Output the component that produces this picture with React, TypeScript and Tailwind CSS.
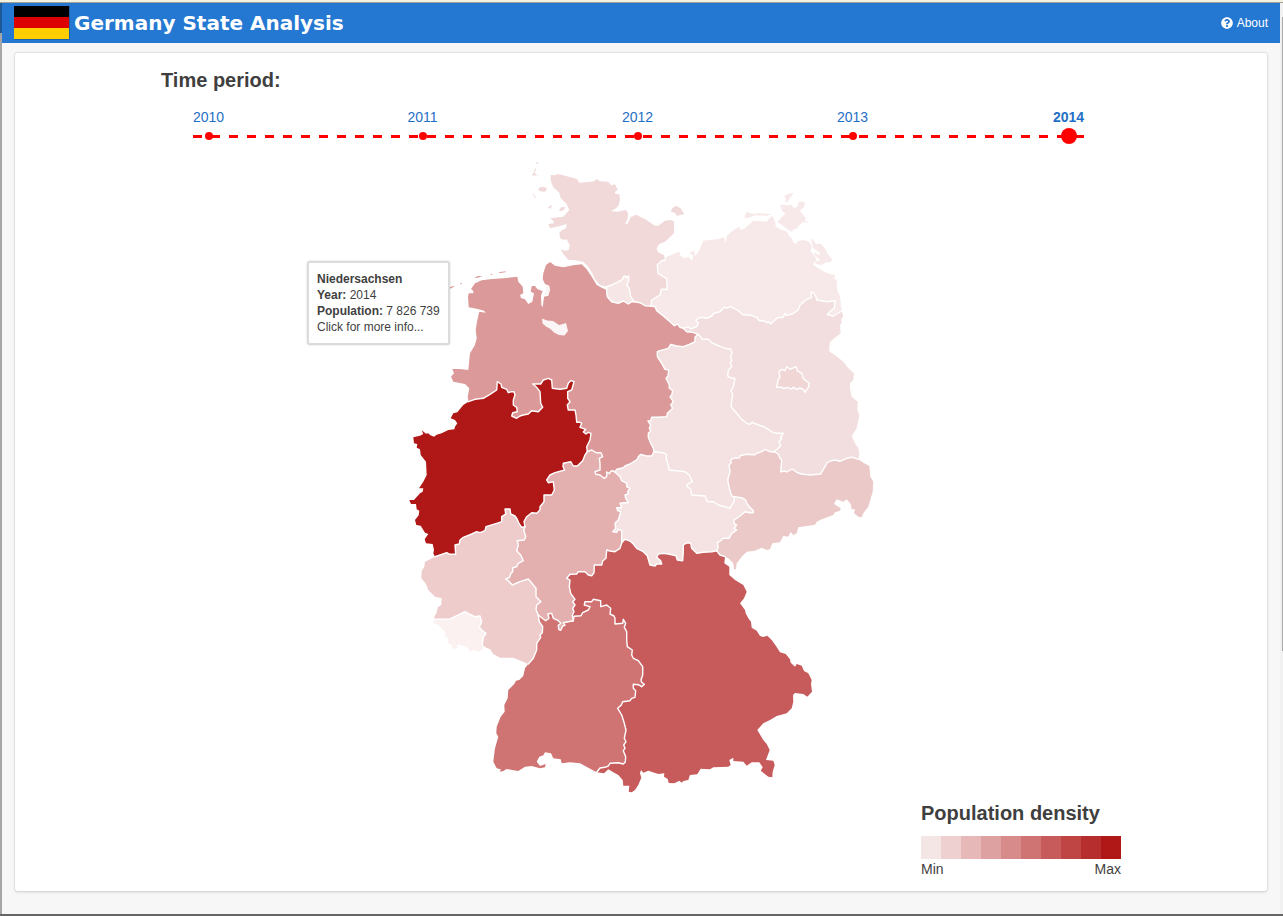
import React from "react";
import { FaQuestionCircle } from "react-icons/fa";

type Pt = [number, number];

// Outlines are recorded per survey tile: a tile origin plus offsets in thirds of a map unit.
const tile =
  (ox: number, oy: number) =>
  (s: string): Pt[] =>
    s
      .trim()
      .split(/\s+/)
      .map((p) => {
        const [x, y] = p.split(",").map(Number);
        return [ox + x / 3, oy + y / 3];
      });

const A = tile(440, 150);
const B = tile(640, 180);
const D = tile(400, 360);
const C = tile(300, 250);
const E = tile(630, 300);
const F = tile(400, 500);
const G = tile(600, 440);
const H = tile(480, 590);
const I = tile(640, 580);

const rev = (p: Pt[]) => [...p].reverse();
const line = (...parts: Pt[][]) =>
  "M" + parts.flat().map(([x, y]) => `${x.toFixed(1)} ${y.toFixed(1)}`).join("L");
const area = (...parts: Pt[][]) => line(...parts) + "Z";

// Shared borders
const shMv = B("75,240 65,242 52,255 54,280 70,290 80,296 82,328 64,328 60,345 35,360 32,378");
const shNi = A("632,468 615,467 600,458 583,455");
const hhSh = A("500,410 515,405 530,398 548,388 550,380 557,378 559,385 566,378 566,392 560,405 568,415 572,440 583,455");
const hhNi = A("583,455 575,455 565,462 550,453 535,460 515,455 502,440 500,428 500,410");
const niMv = B("32,378 45,380 50,392 70,408 90,425 103,437 113,432 120,442 130,445");
const bbMv = B("130,445 145,440 152,447 170,440 175,430 168,422 175,414 185,412 200,415 215,408 222,400 240,395 252,382 262,384 270,380 280,384 295,392 310,405 330,405 350,412 358,422 370,422 380,428 385,425 392,432 405,420 412,413 430,412 435,400 440,407 460,400 475,390 480,375 500,358 515,352 513,336 520,338 527,348 530,360 545,362 560,365 585,362 583,385 572,392 562,404 580,408 605,393");
const niBb = B("130,445 140,455 158,457 175,463");
const niSt = E("203,103 195,112 195,125 178,133 160,140 140,138 122,133 115,145 90,152 82,155 82,170 95,190 105,208 116,210 114,228 108,235 118,255 118,265 128,272 125,285 120,290 130,305 122,315 128,325 112,340 110,350 80,352 65,352 62,362 54,363 62,375 58,385 62,393 55,400 55,412 62,430 70,445 72,455");
const stBb = E("203,103 212,110 215,117 235,118 245,128 260,135 272,140 290,146 303,148 306,160 301,170 306,180 301,188 305,200 295,210 293,228 298,232 315,236 312,250 310,260 303,272 308,282 305,300 303,320 320,340 335,358 350,370 360,373 367,367 385,375 402,380 410,385 425,395 437,400 460,400 452,410 455,415 447,425 452,438 432,455");
const stSn = E("432,455 420,455 405,448 395,455 380,460 375,464 350,463 330,467 328,473 310,475 303,478 303,490 297,495 300,515 293,540 298,565 305,588 313,590");
const stTh = E("72,455 100,458 110,465 108,475 113,490 118,510 140,512 165,515 178,525 187,545 172,553 170,558 182,568 185,585 215,587 225,587 232,605 250,605 265,615 285,620 300,625 308,610 313,603 313,590");
const thSn = [...E("313,590 335,593 347,600 350,610 358,620 370,632"), ...G("460,218 450,218 435,215 420,228 402,240 402,250 410,255 402,265 410,270 395,280 387,295 370,295 360,304 352,308 355,322 350,332")];
const niTh = G("162,35 155,48 140,48 122,43 115,50 112,58 90,72 75,78 70,83 50,88 45,95");
const niHe = D("645,337 640,332 632,334 628,341 620,336 620,350 612,355 600,345 587,343 585,335 600,330 600,310 598,295 608,290 603,278 588,278 575,270 562,275");
const niNw = D("562,275 560,260 570,240 573,220 565,217 558,222 550,216 557,208 540,202 545,190 540,187 530,187 528,165 525,150 505,150 502,135 510,125 503,115 503,95 515,90 522,65 512,62 505,70 500,85 480,88 457,85 455,60 445,55 430,60 422,72 398,72 410,82 420,95 422,130 428,142 415,155 395,152 385,162 370,165 360,168 350,175 335,168 338,158 352,155 350,142 340,135 340,120 345,105 342,95 335,95 325,98 320,88 305,82 303,72 292,65 290,90 270,103 250,115 225,118 205,125");
const nwHe = D("562,275 555,285 548,302 532,318 520,318 512,305 490,310 489,320 494,330 465,338 450,345 440,360 445,368 460,365 463,390 455,405 432,405 432,425 420,440 420,450 410,460 395,458 380,470 372,485 375,500");
const nwRp = D("375,500 365,502 357,490 350,475 345,468 332,462 330,447 315,447 317,462 305,470 305,485 290,490 258,500 255,512 240,518 230,515 215,522 190,532 180,540 178,552 165,555 167,583 150,583 140,578 120,585 105,590");
const heRp = F("375,80 371,90 377,110 373,120 352,122 355,135 350,152 362,165 370,182 355,190 350,200 338,203 338,215 333,220 328,233 317,237 325,242 337,255 360,245 385,237 400,255 408,265 408,290 423,305 410,315 408,330 415,345");
const rpBw = F("415,345 418,365 428,380 427,398 420,405 422,412 410,430 410,450 400,475 385,492");
const heBw = F("415,345 430,357 437,362 447,355 443,342 455,340 460,355 475,362 483,370 475,376 476,388 482,391 488,378 495,376 490,368 505,365 520,362");
const heTh = [...D("645,337 660,350 665,362 680,370 680,380 690,385 683,395 685,402 675,405 677,415 685,428 675,428 660,430 665,443 650,443 653,452 662,455 655,480 645,490 647,505 638,515 650,517 655,508 665,512"), ...F("665,128")];
const heBy = F("665,128 660,145 645,155 630,153 620,150 618,175 608,183 605,195 583,195 582,218 575,227 565,225 555,215 535,215 530,222 510,223 500,235 510,240 508,260 512,280 525,298 518,305 525,315 518,325 522,335 517,345 520,362");
const thBy = G("65,308 75,298 90,303 100,312 110,325 130,335 142,347 150,375 165,378 170,372 185,372 182,362 170,352 175,342 190,340 205,342 228,347 232,360 248,362 250,335 250,315 262,308 272,310 275,325 290,340 310,337 335,335 350,332");
const snBy = G("350,332 360,345 375,350");
const bwBy = H("280,92 282,79 303,77 308,68 325,60 330,50 313,45 315,35 335,35 340,28 362,32 362,50 380,45 392,55 390,72 402,78 405,85 405,102 428,100 430,88 437,100 433,112 440,125 440,150 442,170 457,180 455,195 460,205 475,212 488,230 488,255 483,270 485,277 493,283 485,290 475,284 460,283 460,295 467,302 465,322 455,325 450,332 428,335 424,345 413,355 425,375 433,400 438,420 433,445 438,455 431,465 435,475 430,482 437,500 436,516 430,522 415,518 390,520 385,528 375,532 360,534 350,547");
const rpSl = F("103,358 150,357 175,345 195,335 210,343 225,350 240,348 245,365 238,382 248,393 258,400 250,412 247,435");
const bbSn = E("432,455 445,462 450,475 455,480 452,515 465,513 470,516 487,507 500,517 515,522 540,525 572,522 585,500 592,487 605,482 615,480 630,484 650,475 668,472 685,478");
const berlin = E("440,262 445,237 450,233 447,215 455,208 465,212 470,200 480,208 498,200 502,212 515,220 520,235 528,242 538,250 535,262 525,277 522,270 510,264 500,268 490,262 485,267 470,262 462,266 455,262");

// Coasts and outer frontiers
const shEast = [
  ...A("332,75 345,76 355,72 375,77 410,86 418,98 445,96 462,94 470,87 480,94 505,95 514,106 525,103 533,120 524,126 527,132 538,133 540,150 535,168 525,177 512,183 530,185 558,180 564,190 563,205 556,222 562,223 568,210 573,200 590,194 600,200 615,207"),
  ...B("45,137 55,137 75,122 90,120 102,124 102,160 75,185 58,192 50,205 53,215 60,220 72,225 75,240"),
];
const shWest = A("500,410 480,405 465,388 455,367 445,350 430,335 400,330 385,330 370,312 362,298 375,302 386,300 389,285 380,268 372,270 360,265 358,248 366,240 378,235 380,222 345,232 330,234 325,222 342,220 340,212 330,205 370,200 388,180 380,163 362,145 358,128 340,112 332,92");
const mvCoast = B("75,240 80,230 100,222 118,215 122,228 135,235 145,230 156,242 160,226 150,222 152,215 163,212 165,228 175,215 182,200 190,182 205,180 230,178 252,172 257,190 260,168 280,150 300,140 300,150 312,147 340,122 370,124 380,125 390,112 398,108 406,125 407,140 422,149 442,155 445,165 455,175 460,186 470,193 472,184 490,180 508,185 516,200 512,215 525,228 530,240 518,252 530,262 555,277 580,285 584,282 586,292 578,293 590,300 592,330 600,350 605,393");
const bbEast = [...B("605,393 610,410 604,418"), ...E("634,60 635,70 630,75 632,100 600,125 597,152 603,158 615,165 640,185 655,205 672,220 670,240 660,250 660,265 665,290 683,305 682,330 688,345 683,370 680,385 665,408 675,430 685,445 688,460 685,478")];
const snCoast = [...E("685,478 700,488 718,498 721,530 730,545 728,575 715,620 700,640 695,652 685,650 672,640 675,628 665,628 662,612 650,598 640,605 620,598 612,612 625,620 632,625"), ...G("720,212 705,217 700,225 665,238 650,245 645,254 595,262 590,280 580,285 572,276 565,290 550,288 540,307 517,310 510,328 500,330 485,323 465,332 440,335 425,350 410,370 408,388 402,388 400,370 385,355 375,350")];
const byCoast = [
  ...G("375,350 373,370 388,380 388,405 405,420 430,435 440,455 432,475 420,490 435,510 437,520 445,535"),
  ...I("333,125 335,143 350,152 360,168 370,171 382,167 395,180 408,198 420,217 437,222 450,238 452,248 465,260 470,252 485,257 492,273 505,280 515,300 513,312 516,335 502,350 490,342 465,339 459,345 460,365 455,385 440,400 410,408 390,420 370,430 352,450 370,480 380,492 389,510 378,540 400,542 404,555 398,575 397,592 385,590 362,572 368,562 358,547 335,547 320,557 310,545 280,543 280,533 268,540 272,555 265,560 220,562 210,568 182,566 172,583 150,585 145,600 130,603 125,608 118,602 103,610 86,609 83,597 72,590 73,580 55,582 25,572 10,578"),
  ...H("483,540 480,550 484,563 475,585 465,600 455,607 446,605 448,587 430,587 428,570 415,555 400,547 385,538 372,550 350,547"),
];
const bwCoast = H("145,222 135,235 130,258 118,270 108,272 103,282 85,300 83,325 73,345 74,365 62,380 50,410 49,430 55,440 45,475 40,515 50,535 62,538 60,545 70,543 80,537 115,543 135,530 155,528 180,535 195,532 197,522 180,528 170,515 178,500 190,496 195,487 213,490 220,505 242,508 245,520 270,517 300,520 325,533 350,547");
const rpWest = F("105,170 90,178 75,185 73,200 65,213 64,235 78,252 85,270 105,290 125,295 124,315 113,322 110,338 103,350 103,358");
const rpSouth = F("247,435 260,444 270,447 280,462 300,473 340,473 385,492");
const slCoast = F("103,358 100,370 115,375 135,395 134,407 145,415 145,430 155,436 157,446 173,445 172,433 190,437 205,443 208,455 220,450 235,455 250,448 247,435");
const nwCoast = D("205,125 190,135 172,157 160,160 152,175 165,180 172,190 165,200 163,208 145,210 125,220 110,224 102,230 90,225 85,220 78,221 65,211 70,222 60,227 40,232 42,250 52,252 50,263 60,268 62,285 78,305 80,345 70,365 57,385 70,385 68,395 60,400 42,420 28,420 33,432 48,432 50,448 58,452 56,466 45,480 49,495 62,497 75,518 85,522 74,538 78,550 98,552 102,570 100,580 105,590");
const niCoast = [
  ...C("505,452 503,440 508,415 495,402 460,395 453,380 462,370 457,357 480,357 505,360 510,310 525,285 530,265 527,240 532,210"),
  ...A("118,485 137,488 132,482 110,476 86,472 84,440 86,430 100,430 100,423 93,417 105,400 125,391 150,388 200,384 232,380 235,395 248,410 250,430 240,435 243,444 255,448 265,462 277,455 282,430 272,425 275,408 285,408 292,417 308,424 303,435 304,465 308,472 312,440 325,437 330,420 328,407 315,402 308,388 310,370 318,345 330,336 345,347 370,352 400,346 425,343 440,358 455,380 470,405 485,413 500,420"),
];

const states: { name: string; fill: string; d: string }[] = [
  { name: "Niedersachsen", fill: "#dc9999", d: area(niCoast, rev(hhNi), rev(shNi), niMv, niBb, rev(rev(niSt)), niTh, rev(rev(niHe)), niNw) },
  { name: "Schleswig-Holstein", fill: "#f1d9d9", d: area(shEast, shMv, shNi, rev(hhSh), shWest) },
  { name: "Hamburg", fill: "#f7e6e6", d: area(hhSh, hhNi) },
  { name: "Mecklenburg-Vorpommern", fill: "#f7e9e9", d: area(mvCoast, rev(bbMv), rev(niMv), rev(shMv)) },
  { name: "Brandenburg", fill: "#f2dede", d: area(bbMv, bbEast, rev(bbSn), rev(stBb), rev(niBb)) },
  { name: "Berlin", fill: "#f1d6d6", d: area(berlin) },
  { name: "Sachsen-Anhalt", fill: "#f4e1e1", d: area(stBb, stSn, rev(stTh), rev(niSt)) },
  { name: "Sachsen", fill: "#ecc9c9", d: area(bbSn, snCoast, rev(snBy), rev(thSn), rev(stSn)) },
  { name: "Thüringen", fill: "#f5e3e3", d: area(stTh, thSn, rev(thBy), rev(heTh), rev(niTh)) },
  { name: "Hessen", fill: "#e3afaf", d: area(rev(niHe), heTh, heBy, rev(heBw), rev(heRp), rev(nwHe)) },
  { name: "Nordrhein-Westfalen", fill: "#b01717", d: area(nwCoast, rev(nwRp), rev(nwHe), niNw) },
  { name: "Rheinland-Pfalz", fill: "#eecccc", d: area(nwRp, rpWest, rpSl, rpSouth, rev(rpBw), rev(heRp)) },
  { name: "Saarland", fill: "#fbf1f1", d: area(slCoast, rev(rpSl)) },
  { name: "Baden-Württemberg", fill: "#cf7373", d: area(rpBw, bwCoast, rev(bwBy), rev(heBw)) },
  { name: "Bayern", fill: "#c75b5b", d: area(thBy, snBy, byCoast, rev(bwBy), rev(heBy)) },
];

const borders = [shMv, shNi, hhSh, hhNi, niMv, bbMv, niBb, niSt, stBb, stSn, stTh, thSn, niTh, niHe, niNw, nwHe, nwRp, heRp, rpBw, heBw, heTh, heBy, thBy, snBy, bwBy, rpSl, bbSn, [...berlin, berlin[0]]];

const islands: { fill: string; d: string }[] = [
  { fill: "#f1d9d9", d: area(A("290,37 295,35 293,42 289,41")) },
  { fill: "#f1d9d9", d: area(A("285,54 288,58 284,70 290,74 302,76 288,76 278,77 277,73 282,68")) },
  { fill: "#f1d9d9", d: area(A("294,118 302,111 317,112 321,120 314,125 300,124")) },
  { fill: "#f1d9d9", d: area(A("281,127 280,134 288,141 285,144 278,134")) },
  { fill: "#f1d9d9", d: area(A("324,173 332,165 336,169 330,176")) },
  { fill: "#f1d9d9", d: area(A("357,181 363,172 376,171 371,180 362,184")) },
  { fill: "#f1d9d9", d: area(B("92,95 97,85 107,77 122,85 133,103 110,107 105,98")) },
  { fill: "#dc9999", d: area(A("29,411 45,407 40,411 32,416")) },
  { fill: "#dc9999", d: area(A("60,401 66,399 66,402 60,403")) },
  { fill: "#dc9999", d: area(A("104,382 115,378 128,379 110,384")) },
  { fill: "#dc9999", d: area(A("151,372 157,371 155,376")) },
  { fill: "#dc9999", d: area(A("175,367 198,364 196,367 180,369")) },
  { fill: "#f7e9e9", d: area(B("312,113 320,95 335,101 355,100 396,103 380,107 345,106 325,114")) },
  { fill: "#f7e9e9", d: area(B("420,76 430,74 442,76 455,75 462,85 475,78 474,67 485,64 495,68 493,80 480,92 485,100 497,114 495,122 507,130 490,126 475,138 472,145 462,147 456,155 440,147 430,138 412,126 422,115 437,100 428,95")) },
  { fill: "#f7e9e9", d: area(B("432,48 445,41 461,39 453,50 442,66 435,68 438,55")) },
  { fill: "#f7e9e9", d: area(B("512,174 522,182 528,193 540,190 555,205 562,220 577,238 572,246 558,247 545,255 528,252 525,246 540,240 525,226 520,215 535,225 542,222 535,215 520,205")) },
];

const bremen = "M542 318.5L547 320.5L553 321L559 325L563 324L566 323L568 331L564.5 335.5L559 335L554 332.5L550.5 329L546 326.5L542.5 323.5Z";

const years = [
  { label: "2010", x: 16, active: false },
  { label: "2011", x: 230, active: false },
  { label: "2012", x: 445, active: false },
  { label: "2013", x: 660, active: false },
  { label: "2014", x: 876, active: true },
];

const legend = [
  "bg-[#f5e6e6]",
  "bg-[#eed0d0]",
  "bg-[#e6b8b8]",
  "bg-[#dea1a1]",
  "bg-[#d78b8b]",
  "bg-[#cf7373]",
  "bg-[#c75b5b]",
  "bg-[#bf4545]",
  "bg-[#b72e2e]",
  "bg-[#b01717]",
];

function Header() {
  return (
    <header className="flex h-10 items-center justify-between bg-[#2478d2] pl-3 pr-3 text-white">
      <div className="flex items-center gap-1">
        <div className="flex h-[34px] w-14 flex-col border-r border-b border-black/20">
          <div className="flex-1 bg-black" />
          <div className="flex-1 bg-[#dd0000]" />
          <div className="flex-1 bg-[#ffce00]" />
        </div>
        <h1 className="font-['DejaVu_Sans',sans-serif] text-xl leading-none font-bold whitespace-nowrap">
          Germany State Analysis
        </h1>
      </div>
      <a className="flex items-center gap-1 text-xs">
        <FaQuestionCircle className="size-3" />
        <span>About</span>
      </a>
    </header>
  );
}

function Timeline() {
  return (
    <section className="ml-[146px] pt-3.5">
      <h2 className="text-xl leading-[26px] font-bold">Time period:</h2>
      <svg className="mt-3 ml-8 block h-[40px] w-[900px] overflow-visible" viewBox="0 0 900 40">
        <line x1="0" y1="31.5" x2="891" y2="31.5" stroke="#ff0000" strokeWidth="3" strokeDasharray="9 9" />
        {years.map((y) => (
          <g key={y.label}>
            <text
              x={y.x - 0.4}
              y="17"
              textAnchor="middle"
              fontSize="14"
              fontWeight={y.active ? 700 : 400}
              fill="#1f6fc6"
            >
              {y.label}
            </text>
            <circle cx={y.x} cy="31" r={y.active ? 8 : 4} fill="#ff0000" />
          </g>
        ))}
      </svg>
    </section>
  );
}

function StateMap() {
  return (
    <svg className="mt-[5px] ml-[385px] block h-[650px] w-[480px]" viewBox="400 150 480 650">
      {states.map((s) => (
        <path key={s.name} d={s.d} fill={s.fill} />
      ))}
      {islands.map((s) => (
        <path key={s.d} d={s.d} fill={s.fill} />
      ))}
      <path d={bremen} fill="#fcf5f5" />
      <path d={area(A("316,405 327,407 328,420 325,436 319,438 312,432 318,425"))} fill="#fcf5f5" />
      <g fill="none" stroke="#ffffff" strokeWidth="1.4" strokeLinejoin="round" strokeLinecap="round">
        {borders.map((b, i) => (
          <path key={i} d={line(b)} />
        ))}
      </g>
    </svg>
  );
}

function Tooltip() {
  return (
    <div className="absolute top-[208px] left-[292px] h-[84px] w-[143px] rounded-[3px] border-2 border-[#dcdcdc] bg-white pt-2 pl-2 text-xs leading-4 whitespace-nowrap shadow-[0_0_2px_rgba(0,0,0,0.2)]">
      <p className="font-bold">Niedersachsen</p>
      <p>
        <b>Year:</b> 2014
      </p>
      <p>
        <b>Population:</b> 7 826 739
      </p>
      <p>Click for more info...</p>
    </div>
  );
}

function Legend() {
  return (
    <section className="ml-[906px] w-[200px]">
      <h2 className="text-xl leading-[26px] font-bold whitespace-nowrap">Population density</h2>
      <div className="mt-2.5 flex h-[23px]">
        {legend.map((c) => (
          <div key={c} className={`flex-1 ${c}`} />
        ))}
      </div>
      <div className="flex justify-between text-sm leading-5">
        <span>Min</span>
        <span>Max</span>
      </div>
    </section>
  );
}

export default function App() {
  return (
    <div className="flex h-[916px] w-[1283px] flex-col overflow-hidden bg-[#f7f7f7] font-['Liberation_Sans',Arial,sans-serif] text-[#3f3f3f]">
      <div className="h-[3px] shrink-0 border-b border-[#a3a09a] bg-[#f3f3df]" />
      <div className="flex min-h-0 flex-1">
        <div className="flex w-0.5 flex-col bg-[#a6a6a6]">
          <div className="h-[30px] bg-[#1c5796]" />
        </div>
        <div className="min-w-0 flex-1">
          <Header />
          <main className="relative mt-[10px] ml-[13px] h-[838px] w-[1252px] rounded-xs bg-white shadow-[0_0_2px_rgba(0,0,0,0.3),0_2px_3px_rgba(0,0,0,0.06)]">
            <Timeline />
            <StateMap />
            <Legend />
            <Tooltip />
          </main>
        </div>
        <div className="flex w-[3px] justify-end bg-[#f1f1f1] pt-3.5">
          <div className="h-[634px] w-px bg-[#a8a8a8]" />
        </div>
      </div>
      <div className="h-0.5 shrink-0 bg-[#666666]" />
    </div>
  );
}
